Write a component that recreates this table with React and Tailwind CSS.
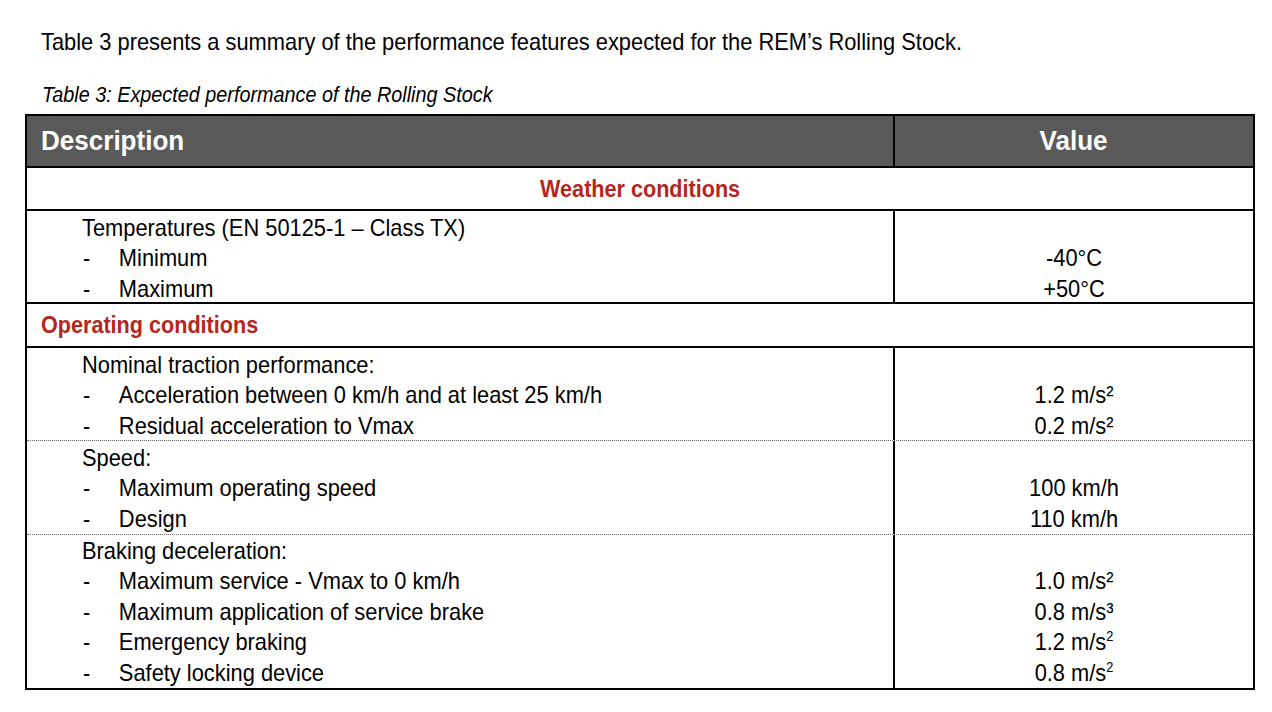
import React from "react";

const F = "font-['Liberation_Sans',Arial,sans-serif]";

function Item({ children }) {
  return (
    <div className="flex">
      <span className="w-[40.5px] shrink-0 pl-[1px]">-</span>
      <span className="whitespace-nowrap">{children}</span>
    </div>
  );
}

function Row({ title, items, values, dotted, last, h, pt }) {
  return (
    <div
      className={`flex ${h} ${last ? "" : dotted ? "border-b border-dotted border-[#666]" : "border-b-2 border-black"}`}
    >
      <div className={`w-[868px] border-r-2 border-black pl-[55px] ${pt} leading-[30.4px]`}>
        <div className="origin-left scale-x-[0.91]">
          <div className="whitespace-nowrap">{title}</div>
          {items.map((t) => (
            <Item key={t}>{t}</Item>
          ))}
        </div>
      </div>
      <div className={`flex-1 text-center ${pt} leading-[30.4px]`}>
        <div className="scale-x-[0.91]">
          <div>&nbsp;</div>
          {values.map((v, i) => (
            <div key={i}>{v}</div>
          ))}
        </div>
      </div>
    </div>
  );
}

function Sup({ children }) {
  return <sup className="text-[14px] top-[-9px]">{children}</sup>;
}

export default function App() {
  return (
    <div className={`bg-white w-[1272px] h-[712px] text-black ${F}`}>
      <p className="pl-[41px] pt-[28px] text-[24px] leading-[28px]">
        <span className="inline-block origin-left scale-x-[0.91] whitespace-nowrap">
          Table 3 presents a summary of the performance features expected for the REM’s Rolling Stock.
        </span>
      </p>
      <p className="pl-[42px] pt-[26px] text-[22px] leading-[26px] italic">
        <span className="inline-block origin-left scale-x-[0.9] whitespace-nowrap">
          Table 3: Expected performance of the Rolling Stock
        </span>
      </p>
      <div className="ml-[25px] mt-[6px] w-[1230px] border-2 border-black text-[24px]">
        <div className="flex h-[52px] bg-[#595959] border-b-2 border-black text-white font-bold text-[28px]">
          <div className="w-[868px] border-r-2 border-black pl-[14px] flex items-center">
            <span className="inline-block origin-left scale-x-[0.93]">Description</span>
          </div>
          <div className="flex-1 flex items-center justify-center">
            <span className="inline-block scale-x-[0.93]">Value</span>
          </div>
        </div>
        <div className="h-[43px] border-b-2 border-black flex items-center justify-center text-[#b5261c] font-bold text-[24px]">
          <span className="inline-block scale-x-[0.9] whitespace-nowrap">Weather conditions</span>
        </div>
        <Row
          h="h-[93px]"
          pt="pt-[2px]"
          title="Temperatures (EN 50125-1 – Class TX)"
          items={["Minimum", "Maximum"]}
          values={["-40°C", "+50°C"]}
        />
        <div className="h-[44px] border-b-2 border-black flex items-center pl-[14px] text-[#b5261c] font-bold text-[24px]">
          <span className="inline-block origin-left scale-x-[0.9] whitespace-nowrap">Operating conditions</span>
        </div>
        <Row
          h="h-[93px]"
          pt="pt-[2px]"
          title="Nominal traction performance:"
          items={["Acceleration between 0 km/h and at least 25 km/h", "Residual acceleration to Vmax"]}
          values={["1.2 m/s²", "0.2 m/s²"]}
          dotted
        />
        <Row
          h="h-[94px]"
          pt="pt-[2px]"
          title="Speed:"
          items={["Maximum operating speed", "Design"]}
          values={["100 km/h", "110 km/h"]}
          dotted
        />
        <Row
          h="h-[153px]"
          pt="pt-[1px]"
          title="Braking deceleration:"
          items={[
            "Maximum service - Vmax to 0 km/h",
            "Maximum application of service brake",
            "Emergency braking",
            "Safety locking device",
          ]}
          values={[
            "1.0 m/s²",
            "0.8 m/s³",
            <>1.2 m/s<Sup>2</Sup></>,
            <>0.8 m/s<Sup>2</Sup></>,
          ]}
          last
        />
      </div>
    </div>
  );
}
